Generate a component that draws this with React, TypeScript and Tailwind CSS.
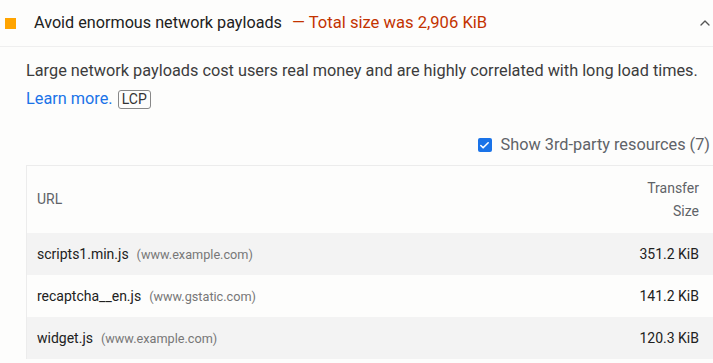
import { ChevronUp, Check } from "lucide-react";

const rows = [
  { file: "scripts1.min.js", host: "(www.example.com)", size: "351.2 KiB" },
  { file: "recaptcha__en.js", host: "(www.gstatic.com)", size: "141.2 KiB" },
  { file: "widget.js", host: "(www.example.com)", size: "120.3 KiB" },
];

export default function App() {
  return (
    <div className="w-[713px] h-[363px] overflow-hidden bg-[#fdfdfc] text-[#212121] font-['Roboto',sans-serif]">
      {/* Audit header */}
      <div className="h-[47px] flex items-center border-b border-[#efefef] pl-[5px] pr-0">
        <div className="w-[11px] h-[11px] bg-[#ffa400] shrink-0" />
        <div className="ml-[18px] text-[16.2px] flex-1 whitespace-nowrap mt-[1px]">
          Avoid enormous network payloads
          <span className="text-[#c33300] ml-[10px] text-[16.6px]">— Total size was 2,906 KiB</span>
        </div>
        <ChevronUp className="w-[16px] h-[16px] text-[#555]" strokeWidth={2} />
      </div>

      {/* Description */}
      <div className="pl-[26px] pr-[10px] pt-[10px]">
        <p className="text-[16.3px] leading-[28px] text-[#3c3c3c] whitespace-nowrap">
          Large network payloads cost users real money and are highly correlated with long load times.
        </p>
        <p className="text-[16.3px] leading-[28px] flex items-center">
          <span className="text-[#1a73e8]">Learn more.</span>
          <span className="ml-[5px] border border-[#888] rounded-[3px] px-[3px] text-[14px] leading-[17px] text-[#333]">LCP</span>
        </p>
      </div>

      {/* 3rd party toggle */}
      <div className="flex justify-end items-center mt-[20px] pr-[3px]">
        <span className="w-[14px] h-[14px] rounded-[2px] bg-[#1a73e8] flex items-center justify-center mr-[9px]">
          <Check className="w-[11px] h-[11px] text-white" strokeWidth={3.5} />
        </span>
        <span className="text-[16.3px] text-[#5f6368]">Show 3rd-party resources (7)</span>
      </div>

      {/* Table */}
      <div className="ml-[26px] mt-[8px] border-l border-t border-[#ececec]">
        <div className="h-[67px] flex items-center justify-between pl-[10px] pr-[14px] text-[14px] text-[#5f6368]">
          <span>URL</span>
          <div className="text-right leading-[23px]">
            <div>Transfer</div>
            <div>Size</div>
          </div>
        </div>
        {rows.map((r, i) => (
          <div
            key={r.file}
            className={`h-[42px] flex items-center justify-between pl-[10px] pr-[14px] text-[14px] ${i % 2 === 0 ? "bg-[#f3f3f3]" : "bg-[#fdfdfc]"}`}
          >
            <div className="whitespace-nowrap">
              <span className="text-[#212121]">{r.file}</span>
              <span className="ml-[8px] text-[12.7px] text-[#777]">{r.host}</span>
            </div>
            <span className="text-[#212121]">{r.size}</span>
          </div>
        ))}
      </div>
    </div>
  );
}
